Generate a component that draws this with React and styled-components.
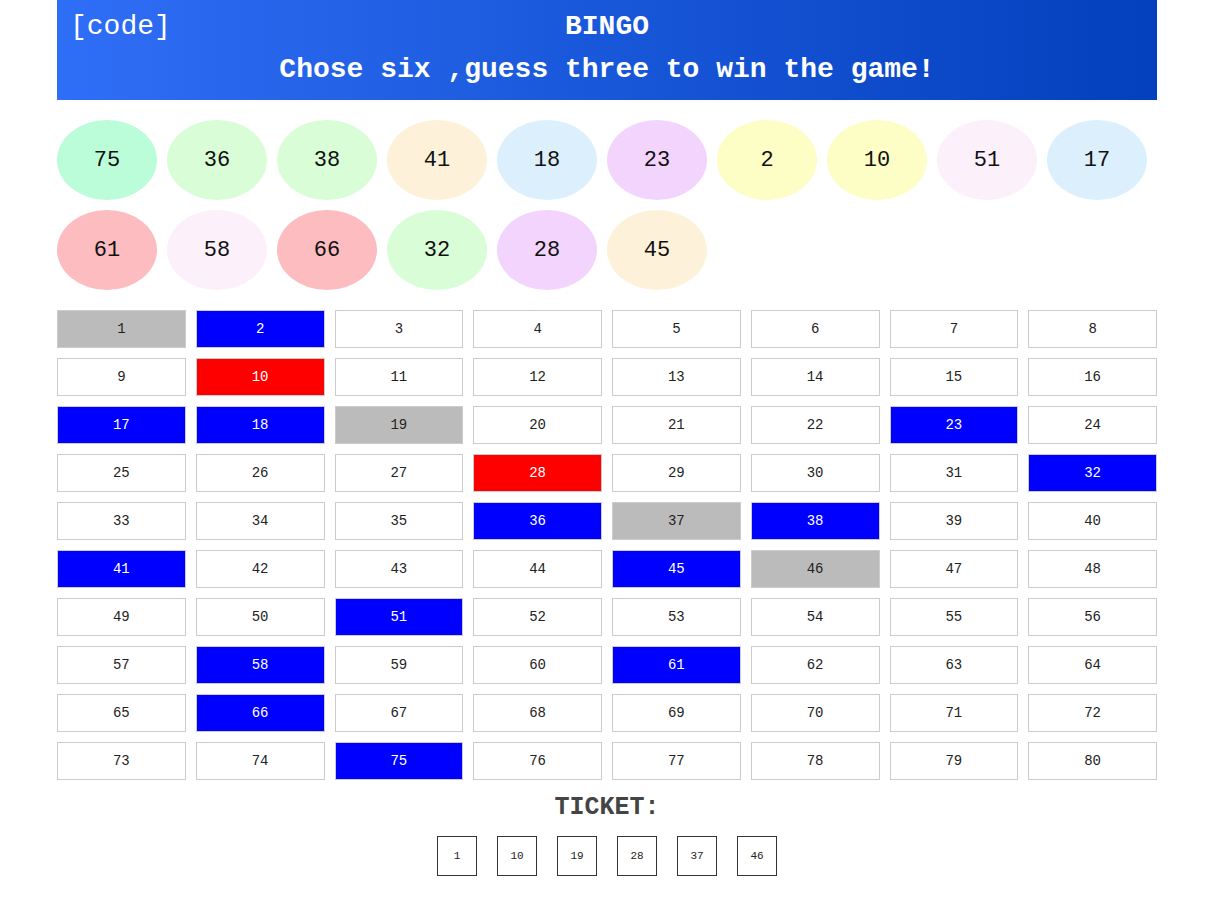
import styled, { createGlobalStyle } from "styled-components";

const GlobalStyle = createGlobalStyle`
    body{
        margin: 0;
        background: #FFFFFF;
        font-family: "Liberation Mono", "Courier New", monospace;
    }
`;

const drawn = [
    { n: 75, c: "#bbfcd9" }, { n: 36, c: "#d9fdd6" }, { n: 38, c: "#d9fdd6" },
    { n: 41, c: "#fdf1d9" }, { n: 18, c: "#dceffd" }, { n: 23, c: "#f3d4fd" },
    { n: 2, c: "#fdfdc6" }, { n: 10, c: "#fdfdc6" }, { n: 51, c: "#fcf0fa" },
    { n: 17, c: "#dceffd" }, { n: 61, c: "#fdbcbf" }, { n: 58, c: "#fcf0fa" },
    { n: 66, c: "#fdbcbf" }, { n: 32, c: "#d9fdd6" }, { n: 28, c: "#f3d4fd" },
    { n: 45, c: "#fdf1d9" },
];
const ticket = [1, 10, 19, 28, 37, 46];

function cellState(n){
    const isDrawn = drawn.some(d => d.n === n);
    const inTicket = ticket.includes(n);
    if(isDrawn && inTicket) return "hit";
    if(isDrawn) return "drawn";
    if(inTicket) return "ticket";
    return "none";
}

export default function App(){
    return(
        <Page>
            <GlobalStyle/>
            <Header>
                <Code>[code]</Code>
                <Title>BINGO</Title>
                <Subtitle>Chose six ,guess three to win the game!</Subtitle>
            </Header>
            <Balls>
                {drawn.map(d => <Ball key={d.n} color={d.c}>{d.n}</Ball>)}
            </Balls>
            <Board>
                {Array.from({ length: 80 }, (_, i) => i + 1).map(n =>
                    <Cell key={n} state={cellState(n)}>{n}</Cell>
                )}
            </Board>
            <TicketTitle>TICKET:</TicketTitle>
            <TicketRow>
                {ticket.map(n => <TicketBox key={n}>{n}</TicketBox>)}
            </TicketRow>
        </Page>
    )
}

const Page = styled.div`
    width: 1100px;
    margin: 0 auto;
`;

const Header = styled.div`
    position: relative;
    height: 100px;
    background: linear-gradient(to right, #2f6ef6, #0340bd);
    color: #FFFFFF;
    display: flex;
    flex-direction: column;
    align-items: center;
`;

const Code = styled.div`
    position: absolute;
    left: 13px;
    top: 11px;
    font-size: 28px;
    line-height: 32px;
`;

const Title = styled.div`
    margin-top: 12px;
    font-size: 28px;
    font-weight: 700;
    line-height: 30px;
`;

const Subtitle = styled.div`
    margin-top: 13px;
    font-size: 28px;
    font-weight: 700;
    line-height: 30px;
`;

const Balls = styled.div`
    display: flex;
    flex-wrap: wrap;
    gap: 10px;
    margin-top: 20px;
`;

const Ball = styled.div`
    width: 100px;
    height: 80px;
    border-radius: 50%;
    background: ${props => props.color};
    display: flex;
    align-items: center;
    justify-content: center;
    font-size: 22px;
    color: #111;
`;

const cellColors = {
    hit: { bg: "#FF0000", fg: "#FFFFFF" },
    drawn: { bg: "#0000FF", fg: "#FFFFFF" },
    ticket: { bg: "#BBBBBB", fg: "#222" },
    none: { bg: "#FFFFFF", fg: "#222" },
};

const Board = styled.div`
    display: grid;
    grid-template-columns: repeat(8, 1fr);
    gap: 10px;
    margin-top: 20px;
`;

const Cell = styled.div`
    height: 38px;
    box-sizing: border-box;
    border: 1px solid #cccccc;
    background: ${props => cellColors[props.state].bg};
    color: ${props => cellColors[props.state].fg};
    display: flex;
    align-items: center;
    justify-content: center;
    font-size: 14px;
`;

const TicketTitle = styled.div`
    margin-top: 15px;
    text-align: center;
    font-size: 25px;
    font-weight: 700;
    color: #444;
    line-height: 26px;
`;

const TicketRow = styled.div`
    display: flex;
    justify-content: center;
    gap: 20px;
    margin-top: 15px;
`;

const TicketBox = styled.div`
    width: 40px;
    height: 40px;
    box-sizing: border-box;
    border: 1px solid #333;
    display: flex;
    align-items: center;
    justify-content: center;
    font-size: 11px;
    color: #222;
`;
